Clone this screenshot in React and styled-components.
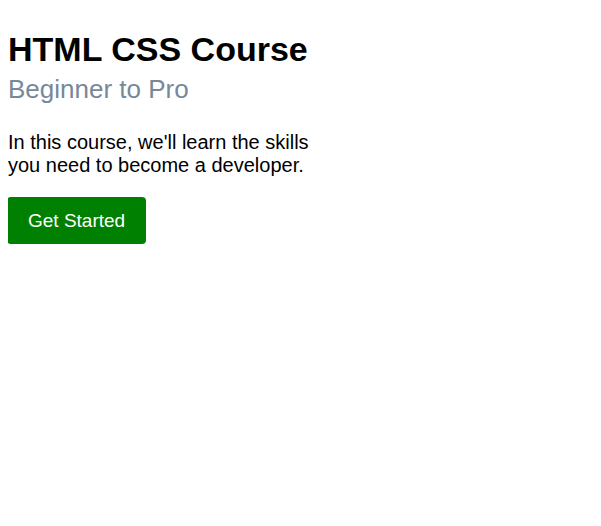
import React from 'react';
import styled, { createGlobalStyle } from 'styled-components';

const GlobalStyle = createGlobalStyle`
  body {
    margin: 8px;
    background: #ffffff;
    font-family: Arial, "Liberation Sans", sans-serif;
  }
`;

const Title = styled.h1`
  font-family: Arial, "Liberation Sans", sans-serif;
  font-weight: bold;
  font-size: 34px;
  margin: 22px 0 5px;
  color: #000000;
`;

const Subtitle = styled.p`
  font-family: Arial, "Liberation Sans", sans-serif;
  font-size: 26px;
  color: #778899;
  margin: 0;
`;

const Description = styled.p`
  font-family: Arial, "Liberation Sans", sans-serif;
  font-size: 20px;
  color: #000000;
  width: 310px;
  margin: 26px 0 20px;
`;

const StartButton = styled.button`
  display: block;
  background-color: #008000;
  color: #ffffff;
  border: none;
  border-radius: 4px;
  font-family: Arial, "Liberation Sans", sans-serif;
  font-size: 19px;
  padding: 12.5px 21px;
  margin-left: -1px;
  cursor: pointer;
`;

export default function App() {
  return (
    <>
      <GlobalStyle />
      <Title>HTML CSS Course</Title>
      <Subtitle>Beginner to Pro</Subtitle>
      <Description>
        In this course, we'll learn the skills you need to become a developer.
      </Description>
      <StartButton>Get Started</StartButton>
    </>
  );
}
